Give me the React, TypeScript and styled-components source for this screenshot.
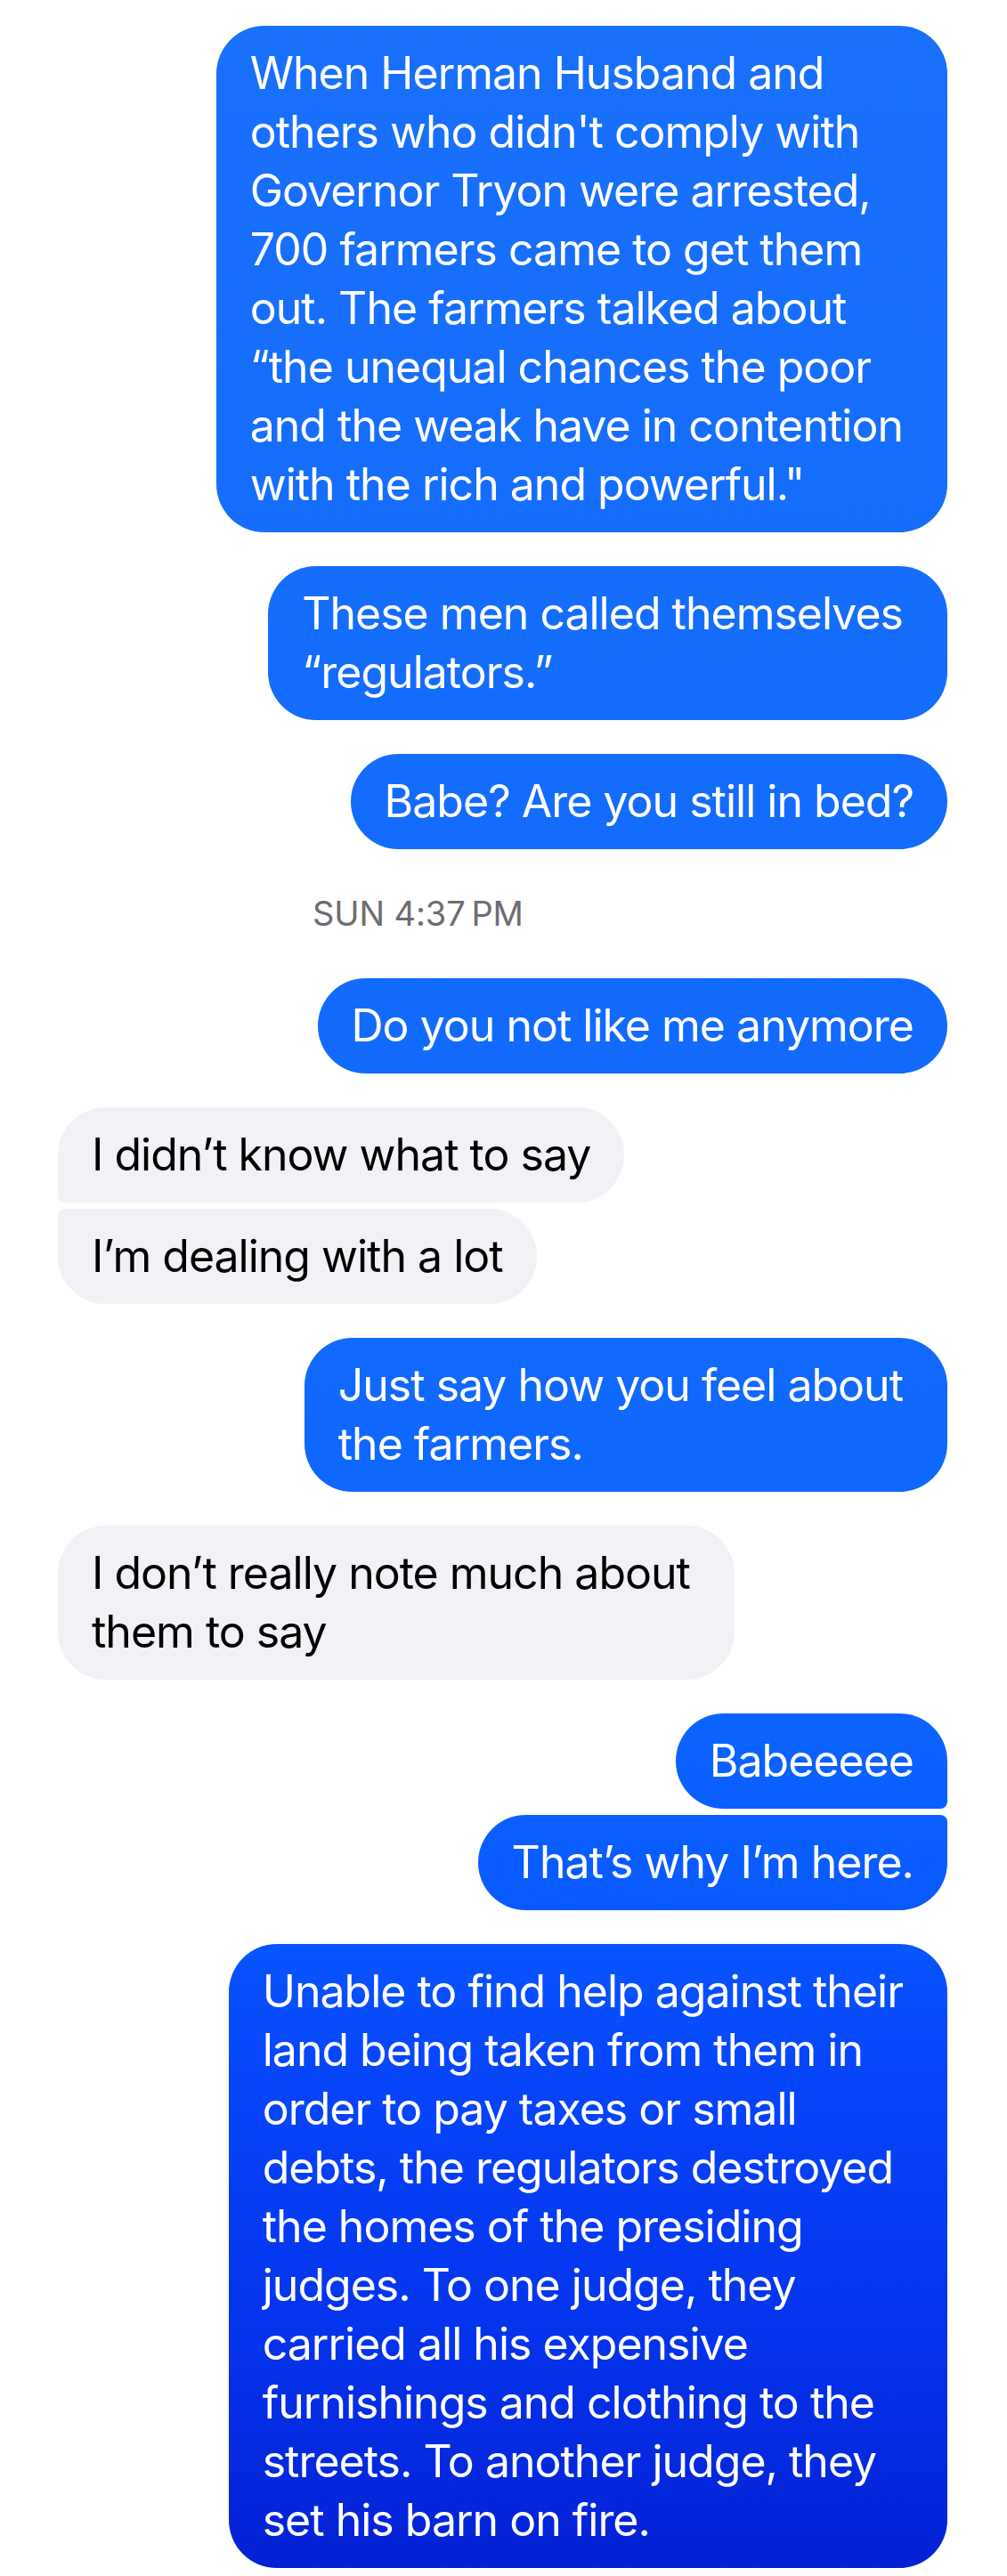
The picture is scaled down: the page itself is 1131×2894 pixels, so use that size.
import React from "react";
import styled, { createGlobalStyle, css } from "styled-components";

type Side = "sent" | "received";
type Spot = "single" | "first" | "last";

interface Message {
  lines: string[];
  spot?: Spot;
}

interface Block {
  kind: "group" | "stamp";
  side?: Side;
  messages?: Message[];
  label?: string;
}

const GlobalStyle = createGlobalStyle`
  html, body {
    margin: 0;
    padding: 0;
    background: #ffffff;
  }
  body {
    font-family: Inter, "Noto Sans", "Liberation Sans", sans-serif;
    -webkit-font-smoothing: antialiased;
  }
`;

const Thread = styled.main`
  display: flex;
  flex-direction: column;
  gap: 38px;
  padding: 29px 67px 8px 65px;
  box-sizing: border-box;
  width: 1131px;
`;

const Group = styled.section<{ $side: Side }>`
  display: flex;
  flex-direction: column;
  gap: 7px;
  align-items: ${(p) => (p.$side === "sent" ? "flex-end" : "flex-start")};
`;

const Stamp = styled.div`
  height: 69px;
  line-height: 69px;
  padding-left: 286px;
  font-size: 38px;
  letter-spacing: -0.1px;
  color: #6c6d71;
  white-space: nowrap;
`;

const cornersFor = (side: Side, spot: Spot) => {
  const big = "54px";
  const small = "8px";
  if (spot === "single") return css`border-radius: ${big};`;
  if (side === "sent") {
    return spot === "first"
      ? css`border-radius: ${big} ${big} ${small} ${big};`
      : css`border-radius: ${big} ${small} ${big} ${big};`;
  }
  return spot === "first"
    ? css`border-radius: ${big} ${big} ${big} ${small};`
    : css`border-radius: ${small} ${big} ${big} ${big};`;
};

const Bubble = styled.div<{ $side: Side; $spot: Spot; $wrapped: boolean }>`
  box-sizing: border-box;
  padding: 20px ${(p) => (p.$wrapped ? "50px" : "38px")} 21px 38px;
  font-size: 50px;
  line-height: 66px;
  letter-spacing: -1px;
  white-space: nowrap;
  ${(p) => cornersFor(p.$side, p.$spot)}
  ${(p) =>
    p.$side === "sent"
      ? css`
          color: #ffffff;
          background-color: #1069fd;
          background-image: linear-gradient(
            to bottom,
            #1870fb 0px,
            #1169fd 1500px,
            #0b65ff 1900px,
            #0959ff 2150px,
            #0746fb 2320px,
            #0535ee 2600px,
            #0420d3 2894px
          );
          background-attachment: fixed;
        `
      : css`
          color: #000000;
          background: #f1f2f6;
        `}
`;

const Line = styled.span`
  display: block;
`;

const blocks: Block[] = [
  {
    kind: "group",
    side: "sent",
    messages: [
      {
        lines: [
          "When Herman Husband and",
          "others who didn't comply with",
          "Governor Tryon were arrested,",
          "700 farmers came to get them",
          "out. The farmers talked about",
          "\u201cthe unequal chances the poor",
          "and the weak have in contention",
          'with the rich and powerful."',
        ],
      },
    ],
  },
  {
    kind: "group",
    side: "sent",
    messages: [{ lines: ["These men called themselves", "\u201cregulators.\u201d"] }],
  },
  {
    kind: "group",
    side: "sent",
    messages: [{ lines: ["Babe? Are you still in bed?"] }],
  },
  { kind: "stamp", label: "SUN 4:37\u2009PM" },
  {
    kind: "group",
    side: "sent",
    messages: [{ lines: ["Do you not like me anymore"] }],
  },
  {
    kind: "group",
    side: "received",
    messages: [
      { lines: ["I didn\u2019t know what to say"], spot: "first" },
      { lines: ["I\u2019m dealing with a lot"], spot: "last" },
    ],
  },
  {
    kind: "group",
    side: "sent",
    messages: [{ lines: ["Just say how you feel about", "the farmers."] }],
  },
  {
    kind: "group",
    side: "received",
    messages: [{ lines: ["I don\u2019t really note much about", "them to say"] }],
  },
  {
    kind: "group",
    side: "sent",
    messages: [
      { lines: ["Babeeeee"], spot: "first" },
      { lines: ["That\u2019s why I\u2019m here."], spot: "last" },
    ],
  },
  {
    kind: "group",
    side: "sent",
    messages: [
      {
        lines: [
          "Unable to find help against their",
          "land being taken from them in",
          "order to pay taxes or small",
          "debts, the regulators destroyed",
          "the homes of the presiding",
          "judges. To one judge, they",
          "carried all his expensive",
          "furnishings and clothing to the",
          "streets. To another judge, they",
          "set his barn on fire.",
        ],
      },
    ],
  },
];

const App: React.FC = () => {
  return (
    <>
      <GlobalStyle />
      <Thread>
        {blocks.map((block, i) =>
          block.kind === "stamp" ? (
            <Stamp key={i}>{block.label}</Stamp>
          ) : (
            <Group key={i} $side={block.side!}>
              {block.messages!.map((msg, j) => (
                <Bubble
                  key={j}
                  $side={block.side!}
                  $spot={msg.spot ?? "single"}
                  $wrapped={msg.lines.length > 1}
                >
                  {msg.lines.map((line, k) => (
                    <Line key={k}>{line}</Line>
                  ))}
                </Bubble>
              ))}
            </Group>
          )
        )}
      </Thread>
    </>
  );
};

export default App;
